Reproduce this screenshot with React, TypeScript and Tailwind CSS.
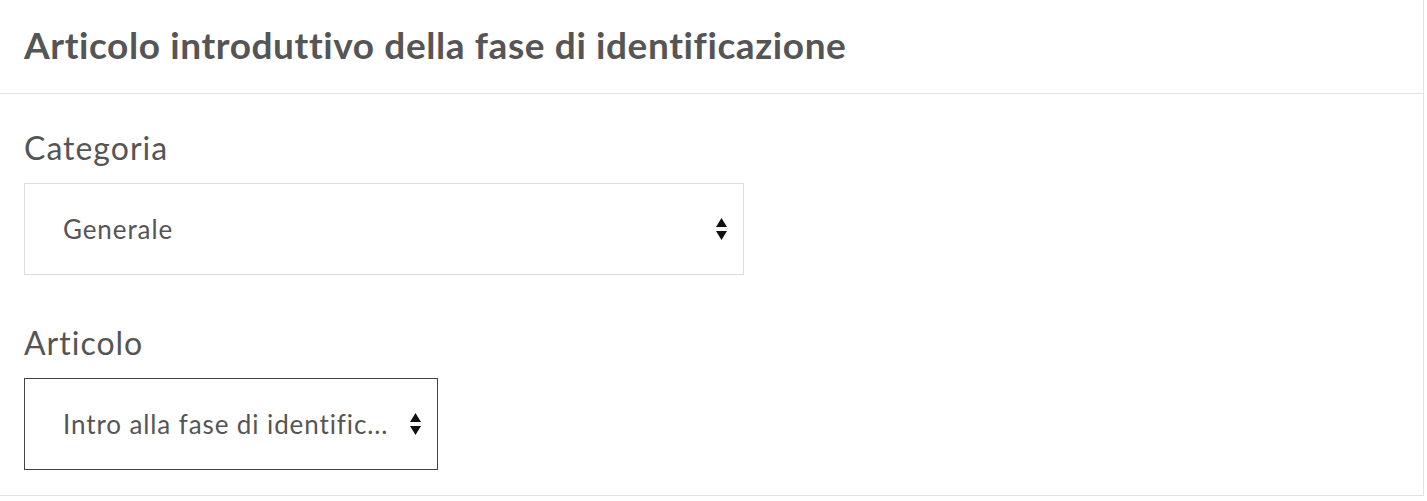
import React from "react";

function Arrows() {
  return (
    <svg width="11" height="22" viewBox="0 0 11 22" className="shrink-0">
      <polygon points="5.5,0 11,9 0,9" fill="#111" />
      <polygon points="0,13 11,13 5.5,22" fill="#111" />
    </svg>
  );
}

function SelectBox({
  value,
  width,
  active,
}: {
  value: string;
  width: string;
  active?: boolean;
}) {
  return (
    <div
      className={`flex h-[92px] items-center border bg-white pl-[38px] pr-4 ${width} ${
        active ? "border-[#444]" : "border-[#dcdcdc]"
      }`}
    >
      <span className="min-w-0 flex-1 whitespace-nowrap pr-4 text-[26px] tracking-[0.9px] text-[#555]">
        {value}
      </span>
      <Arrows />
    </div>
  );
}

export default function App() {
  return (
    <div className="min-h-[501px] bg-white">
      <section className="w-[1424px] border-r border-b border-[#e3e3e3] bg-white font-['Lato',sans-serif]">
        <header className="flex h-[94px] items-center border-b border-[#e3e3e3] px-6 pb-[4px]">
          <h1 className="text-[37px] font-bold tracking-[0.6px] text-[#555]">
            Articolo introduttivo della fase di identificazione
          </h1>
        </header>
        <div className="flex flex-col px-6 pb-[25px] pt-[33px]">
          <label className="mb-[14px] block text-[32px] leading-[42px] tracking-[1px] text-[#555]">
            Categoria
          </label>
          <SelectBox value="Generale" width="w-[720px]" />
          <label className="mb-[14px] mt-[47px] block text-[32px] leading-[42px] tracking-[1px] text-[#555]">
            Articolo
          </label>
          <SelectBox
            value="Intro alla fase di identific..."
            width="w-[414px]"
            active
          />
        </div>
      </section>
    </div>
  );
}
